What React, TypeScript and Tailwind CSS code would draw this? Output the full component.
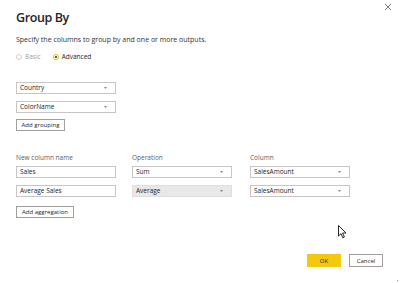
import React from 'react';

function Caret() {
  return (
    <svg width="3" height="2" viewBox="0 0 3 2" className="shrink-0">
      <path d="M0 0 L3 0 L1.5 2 Z" fill="#8a8886" />
    </svg>
  );
}

function Dropdown({ value, disabled }: { value: string; disabled?: boolean }) {
  return (
    <div
      className={`flex h-[12px] w-[100px] items-center justify-between border px-[3px] ${
        disabled ? 'border-[#e1dfdd] bg-[#e8e8e8]' : 'border-[#c8c6c4] bg-white'
      }`}
    >
      <span className="text-[6.5px] leading-none text-[#252423]">{value}</span>
      <span className="mr-[5px] flex">
        <Caret />
      </span>
    </div>
  );
}

function TextInput({ value }: { value: string }) {
  return (
    <div className="flex h-[12px] w-[100px] items-center border border-[#c8c6c4] bg-white px-[3px]">
      <span className="text-[6.5px] leading-none text-[#252423]">{value}</span>
    </div>
  );
}

function SmallButton({ label, width }: { label: string; width: string }) {
  return (
    <div className={`flex h-[12px] ${width} items-center justify-center border border-[#a19f9d] bg-white`}>
      <span className="text-[6px] leading-none text-[#252423]">{label}</span>
    </div>
  );
}

export default function App() {
  return (
    <div
      className="relative h-[283px] w-[400px] overflow-hidden bg-white pl-[16px] pt-[8px] text-[#252423]"
      style={{ fontFamily: '"Segoe UI", "Open Sans", "Noto Sans", sans-serif' }}
    >
      {/* close */}
      <svg className="absolute right-[8px] top-[3px]" width="8" height="8" viewBox="0 0 8 8">
        <path d="M1 1 L7 7 M7 1 L1 7" stroke="#605e5c" strokeWidth="0.8" />
      </svg>

      <h1 className="text-[12.5px] font-semibold leading-[20px] tracking-[-0.4px] text-[#252423]">Group By</h1>
      <p className="mt-[6px] text-[7px] leading-[12px] text-[#323130]">
        Specify the columns to group by and one or more outputs.
      </p>

      <div className="mt-[5px] flex h-[12px] items-center text-[6.5px] leading-none">
        <span className="h-[6px] w-[6px] rounded-full border border-[#d2d0ce]" />
        <span className="ml-[3px] text-[#a19f9d]">Basic</span>
        <span className="ml-[12px] flex h-[6px] w-[6px] items-center justify-center rounded-full border border-[#e6b800]">
          <span className="h-[2px] w-[2px] rounded-full bg-[#252423]" />
        </span>
        <span className="ml-[3px] text-[#252423]">Advanced</span>
      </div>

      <div className="mt-[19px] flex flex-col gap-[7px]">
        <Dropdown value="Country" />
        <Dropdown value="ColorName" />
      </div>
      <div className="mt-[6px]">
        <SmallButton label="Add grouping" width="w-[49px]" />
      </div>

      <div className="mt-[22px] flex gap-[16px]">
        <div className="flex flex-col">
          <span className="text-[6.5px] leading-[10px] text-[#605e5c]">New column name</span>
          <div className="mt-[3px] flex flex-col gap-[7px]">
            <TextInput value="Sales" />
            <TextInput value="Average Sales" />
          </div>
        </div>
        <div className="flex flex-col">
          <span className="text-[6.5px] leading-[10px] text-[#605e5c]">Operation</span>
          <div className="mt-[3px] flex flex-col gap-[7px]">
            <Dropdown value="Sum" />
            <Dropdown value="Average" disabled />
          </div>
        </div>
        <div className="ml-[2px] flex flex-col">
          <span className="text-[6.5px] leading-[10px] text-[#605e5c]">Column</span>
          <div className="mt-[3px] flex flex-col gap-[7px]">
            <Dropdown value="SalesAmount" />
            <Dropdown value="SalesAmount" />
          </div>
        </div>
      </div>
      <div className="mt-[9px]">
        <SmallButton label="Add aggregation" width="w-[58px]" />
      </div>

      <div className="mr-[17px] mt-[36px] flex justify-end gap-[8px]">
        <div className="flex h-[13px] w-[34px] items-center justify-center bg-[#f2c811]">
          <span className="text-[6px] leading-none text-[#252423]">OK</span>
        </div>
        <div className="flex h-[13px] w-[34px] items-center justify-center border border-[#a19f9d] bg-white">
          <span className="text-[6px] leading-none text-[#252423]">Cancel</span>
        </div>
      </div>

      {/* mouse pointer */}
      <svg className="absolute left-[338px] top-[225px]" width="9" height="14" viewBox="0 0 9 14">
        <path d="M0.5 0.5 L0.5 11 L3 8.6 L4.8 12.8 L6.4 12.1 L4.6 8 L8 8 Z" fill="white" stroke="#111" strokeWidth="0.9" strokeLinejoin="round" />
      </svg>

      {/* resize grip */}
      <svg className="absolute bottom-[1px] right-[1px]" width="4" height="4" viewBox="0 0 4 4">
        <rect x="2" y="2" width="1.2" height="1.2" fill="#a19f9d" />
      </svg>
    </div>
  );
}
